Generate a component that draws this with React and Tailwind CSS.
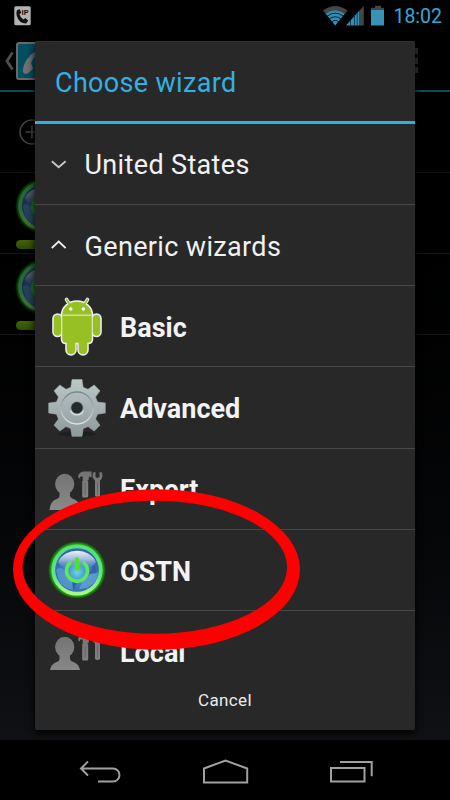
import React from "react";

function Globe({ className }) {
  return (
    <svg viewBox="0 0 60 60" className={className}>
      <defs>
        <radialGradient id="glow">
          <stop offset="0.84" stopColor="#22d400" stopOpacity="1" />
          <stop offset="0.92" stopColor="#1fae00" stopOpacity="0.75" />
          <stop offset="1" stopColor="#1a8a00" stopOpacity="0" />
        </radialGradient>
        <linearGradient id="ring" x1="0" y1="0" x2="0" y2="1">
          <stop offset="0" stopColor="#4fe07c" />
          <stop offset="0.6" stopColor="#5de58a" />
          <stop offset="1" stopColor="#b0f98c" />
        </linearGradient>
        <radialGradient id="sea" cx="0.5" cy="0.55" r="0.55">
          <stop offset="0" stopColor="#6ed6e6" />
          <stop offset="0.45" stopColor="#3d86c4" />
          <stop offset="1" stopColor="#3562a6" />
        </radialGradient>
        <linearGradient id="gloss" x1="0" y1="0" x2="0" y2="1">
          <stop offset="0" stopColor="#f0f4fb" />
          <stop offset="0.5" stopColor="#b9cbe4" stopOpacity="0.8" />
          <stop offset="1" stopColor="#7ea6d6" stopOpacity="0.1" />
        </linearGradient>
      </defs>
      <circle cx="30" cy="30" r="29" fill="url(#glow)" />
      <circle cx="30" cy="30" r="25.6" fill="url(#ring)" />
      <circle cx="30" cy="30" r="21.8" fill="url(#sea)" />
      <path d="M9 30q4-4 8 0l5 8 6 3-2 9q-9-1-14-9z" fill="#5b9fd0" opacity=".7" />
      <path d="M37 38l5-2 4-9 5 6q-1 10-11 15l-8 1z" fill="#6aa6d6" opacity=".75" />
      <path d="M25 41l5 1-4 8zM42 34l5-9 3 8z" fill="#2850a0" opacity=".75" />
      <path d="M11 22a20.500 18 0 0 1 38 0q-5 7-12 6-7-5-14 0-8 1-12-6z" fill="url(#gloss)" />
      <path d="M23 23a10.500 10.500 0 1 0 14 0" fill="none" stroke="#5ce95c" strokeWidth="3.600" strokeLinecap="round" />
      <path d="M30 19.500v9" stroke="#4be821" strokeWidth="4.400" strokeLinecap="round" />
    </svg>
  );
}

function Robot() {
  const body = (
    <>
      <path d="M15.500 18a14.500 13 0 0 1 29 0z" />
      <path d="M15.500 18h29v24q0 3.500-3.500 3.500H40V53a4 4 0 0 1-8 0v-7.500h-4V53a4 4 0 0 1-8 0v-7.500h-1q-3.500 0-3.500-3.500z" />
      <rect x="7" y="18" width="7" height="20.500" rx="3.500" />
      <rect x="46" y="18" width="7" height="20.500" rx="3.500" />
      <path d="M23 8l-3.500-5.500M37 8l3.500-5.500" fill="none" strokeLinecap="round" />
    </>
  );
  return (
    <svg viewBox="0 0 60 60" className="size-[60px]">
      <g fill="#efefef" stroke="#efefef" strokeWidth="3.600">{body}</g>
      <g fill="#97c024" stroke="#97c024" strokeWidth="0.500">{body}</g>
      <path d="M23 8l-3.500-5.500M37 8l3.500-5.500" stroke="#97c024" strokeWidth="1.500" strokeLinecap="round" />
      <path d="M15.500 18.200h29" stroke="#dfe9bd" strokeWidth="1.200" />
      <circle cx="23.800" cy="12" r="1.700" fill="#fff" />
      <circle cx="36.300" cy="12" r="1.700" fill="#fff" />
    </svg>
  );
}

function Gear() {
  return (
    <svg viewBox="0 0 60 60" className="size-[60px]">
      <defs>
        <linearGradient id="steel" x1="0" y1="0" x2="0" y2="1">
          <stop offset="0" stopColor="#bcc7c8" />
          <stop offset="1" stopColor="#8d9a9b" />
        </linearGradient>
        <linearGradient id="rim" x1="0" y1="0" x2="0" y2="1">
          <stop offset="0" stopColor="#788687" />
          <stop offset="1" stopColor="#dce3e3" />
        </linearGradient>
      </defs>
      <ellipse cx="30" cy="56" rx="19" ry="2.500" fill="#191919" opacity=".7" />
      <path
        fill="url(#steel)"
        stroke="#9da9aa"
        strokeWidth=".6"
        d="M25 1.500h10l1.200 7.800 4.800 2L47.200 7 53 12.800 48.500 19l2 5 7.800 1v10l-7.800 1.200-2 4.800 4.500 6.200L47.200 53 41 48.600l-4.800 2L35 58.300H25l-1.200-7.700-4.800-2L12.800 53 7 47.200l4.500-6.200-2-4.800L1.700 35V25l7.800-1 2-5L7 12.800 12.800 7 19 11.300l4.800-2z"
      />
      <circle cx="30" cy="30" r="16" fill="none" stroke="url(#rim)" strokeWidth="1.300" />
      <circle cx="30" cy="30" r="6.800" fill="#89999a" />
      <path d="M23.500 32.500a7 7 0 0 0 13 0" fill="none" stroke="#dfe5e5" strokeWidth="1.200" />
      <circle cx="30" cy="29.800" r="5.700" fill="#272a2a" />
    </svg>
  );
}

function Person() {
  return (
    <svg viewBox="0 0 60 60" className="size-[60px]">
      <defs>
        <linearGradient id="gray" gradientUnits="userSpaceOnUse" x1="0" y1="12" x2="0" y2="51">
          <stop offset="0" stopColor="#737373" />
          <stop offset="1" stopColor="#898989" />
        </linearGradient>
      </defs>
      <g fill="url(#gray)">
        <ellipse cx="17.700" cy="25" rx="9.600" ry="10.300" />
        <path d="M12.500 31h10.500v6q.5 2 4.500 3.500 5.500 2.500 6 10.500h-31q.5-8 6-10.500 4-1.500 4-3.500z" />
        <path d="M31 18q.5-4.500 5-5.500h8.500v6L42 17.500l-.5 3.500h-5.800v-3.500H33.500l-1 2z" />
        <rect x="35.200" y="21" width="6" height="17.500" rx="1.500" />
        <path d="M46 13.500q-1.500 5 2 8V37q2.500 2 5 0V21.500q3.500-3 2-8l-2.500-.5v5l-2 1-2-1V13z" />
      </g>
      <path d="M38.200 24v12M50.500 24v12" stroke="#666" strokeWidth="1" />
    </svg>
  );
}

function Group({ label, open }) {
  return (
    <div className="flex h-[81.250px] shrink-0 items-center border-b border-[#474747] pl-4">
      <svg viewBox="0 0 16 10" className="h-2.5 w-4" fill="none" stroke={open ? "#efefef" : "#c9c9c9"} strokeWidth="1.800">
        <path d={open ? "M.8 8L7.700 1.600l6.900 6.400" : "M.8 2.200L7.700 8.200l6.900-6"} />
      </svg>
      <span className="ml-[17.500px] whitespace-nowrap pt-1 text-[27px] tracking-[0.350px] text-[#f1f1f1]">{label}</span>
    </div>
  );
}

function Item({ label, icon }) {
  return (
    <div className="flex h-[81.250px] shrink-0 items-center border-b border-[#474747] pt-px pl-3">
      <div className="flex w-[73px] shrink-0">{icon}</div>
      <span className="whitespace-nowrap pt-[3px] text-[27px] font-bold text-[#f3f3f3]">{label}</span>
    </div>
  );
}

function StatusBar() {
  return (
    <div className="flex h-8 shrink-0 items-center bg-black pr-2 pl-3.5">
      <svg viewBox="0 0 17 20" className="h-5 w-[17px]">
        <rect x=".3" y=".3" width="16.400" height="19" rx="1.500" fill="#b3b3b3" />
        <path d="M2.800 4.500L5.500 3l1.800 3.800-1.800 1.400q.8 3.800 4 5.300l1.700-1.500 3 2.500-2 3Q5 17.500 2.800 10q-.8-3.500 0-5.500z" fill="#111" />
        <text x="7.500" y="8.500" fontSize="7.500" fontWeight="700" fill="#111">IP</text>
      </svg>
      <div className="grow" />
      <svg viewBox="0 0 62 22" className="mr-[8.500px] h-[22px] w-[62px]">
        <path d="M0 5.500Q12.200-3.500 24.400 5.500L21.800 9Q12.200 3 2.600 9z" fill="#454545" />
        <path d="M2.600 8.800Q12.200 1.500 21.800 8.800L12.200 20.500z" fill="#318fb7" />
        <path d="M4 11.200Q12.200 5 20.400 11.200M6 14Q12.200 9.500 18.400 14M8.500 17Q12.200 13.800 15.900 17" fill="none" stroke="#05202c" strokeWidth="1" />
        <path d="M36 6l4.800-5v19.500H36z" fill="#454545" />
        <path d="M23 20.500L36 6v14.500z" fill="#318fb7" />
        <path d="M27.500 15v6M31.500 10v11M34.200 8v13" stroke="#0b2e3d" strokeWidth=".8" />
        <path d="M52 .8h6v2h3v2.500H48V2.800h4z" fill="#454545" />
        <path d="M48 5h13v15.500H48z" fill="#3792b8" />
      </svg>
      <span className="pt-px text-[19.500px] text-[#33a9d8]">18:02</span>
    </div>
  );
}

function Account() {
  return (
    <div className="flex h-[81.250px] shrink-0 flex-col border-b border-[#15171a] pt-1 pl-3.5">
      <Globe className="size-[58px] shrink-0 opacity-45" />
      <div className="mt-[5px] ml-0.5 h-[9.500px] w-12 shrink-0 rounded-full bg-linear-to-b from-[#426309] to-[#304c08]" />
    </div>
  );
}

function Background() {
  return (
    <div className="flex h-[708px] shrink-0 flex-col bg-linear-to-b from-black to-[#0f1114]">
      <div className="flex h-[59.500px] shrink-0 items-center border-b-2 border-[#0f4960] bg-black pl-1">
        <svg viewBox="0 0 10 20" className="h-5 w-2.5" fill="none" stroke="#4d4d4d" strokeWidth="2.800">
          <path d="M8.500 1.500L3 10l5.500 8.500" />
        </svg>
        <svg viewBox="0 0 38 38" className="ml-0.5 size-[38px]">
          <rect x="1" y="1" width="36" height="36" rx="2" fill="#034f61" stroke="#686868" strokeWidth="2" />
          <path d="M23 8q-10 3-15 15-3 9 2 9 5-2 7-6l-2-5q3-7 8-9z" fill="#717171" />
        </svg>
        <div className="grow" />
        <div className="mr-8 flex flex-col gap-[3.500px]">
          <i className="size-1.5 bg-[#333]" />
          <i className="size-1.5 bg-[#333]" />
          <i className="size-1.5 bg-[#333]" />
        </div>
      </div>
      <div className="flex h-[81px] shrink-0 items-center border-b border-[#111213] pl-[19px]">
        <svg viewBox="0 0 26 26" className="size-[26px]" fill="none" stroke="#424242" strokeWidth="1.600">
          <circle cx="13" cy="13" r="12" />
          <path d="M13 6.500v13M6.500 13h13" />
        </svg>
      </div>
      <Account />
      <Account />
    </div>
  );
}

function NavBar() {
  return (
    <div className="flex h-[60px] shrink-0 items-center justify-between bg-black pt-1 pr-[77px] pl-[79px]">
      <svg viewBox="0 0 42 24" className="h-6 w-[42px]" fill="none" stroke="#a1a1a1" strokeWidth="2">
        <path d="M9 1.500L2 8.500l7 7M2 8.500h32a6.500 6.500 0 0 1 0 13H19" />
      </svg>
      <svg viewBox="0 0 46 26" className="h-[26px] w-[46px]" fill="none" stroke="#a1a1a1" strokeWidth="2">
        <path d="M1 9.500L22.500 1.500l21.700 8v14H1z" />
      </svg>
      <svg viewBox="0 0 43 24" className="h-6 w-[43px]" fill="none" stroke="#a1a1a1" strokeWidth="2">
        <path d="M1 8h33.500v13.500H1zM10 2h31.700v14.200" />
      </svg>
    </div>
  );
}

export default function App() {
  return (
    <div className="relative flex h-[800px] w-[450px] flex-col overflow-hidden bg-black font-[Roboto,sans-serif]">
      <StatusBar />
      <Background />
      <NavBar />
      <div className="absolute top-[41px] left-[35px] flex h-[689px] w-[380px] flex-col rounded-[2px] border-t border-[#333] bg-[#282828] shadow-[0_3px_9px_#000]">
        <div className="flex h-[82px] shrink-0 items-center border-b-[3px] border-[#2fb0e2] pt-1 pl-5">
          <h1 className="text-[27px] tracking-[0.330px] text-[#33b0e2]">Choose wizard</h1>
        </div>
        <div className="flex h-[546px] shrink-0 flex-col overflow-hidden">
          <div className="-mt-[0.500px] flex shrink-0 flex-col">
            <Group label="United States" />
            <Group label="Generic wizards" open />
            <Item label="Basic" icon={<Robot />} />
            <Item label="Advanced" icon={<Gear />} />
            <Item label="Expert" icon={<Person />} />
            <Item label="OSTN" icon={<Globe className="size-[60px]" />} />
            <Item label="Local" icon={<Person />} />
          </div>
        </div>
        <button className="flex grow items-center justify-center pt-0.5 text-[17px] tracking-[0.350px] text-[#ececec]">Cancel</button>
      </div>
      <svg viewBox="0 0 450 800" className="pointer-events-none absolute inset-0 h-[800px] w-[450px]">
        <path
          fill="#fe0000"
          fillRule="evenodd"
          d="M13 569.500a143.500 80.300 0 1 0 287 0a143.500 80.300 0 1 0-287 0zM22.500 567.200a132.300 66.500 0 1 0 264.600 0a132.300 66.500 0 1 0-264.600 0z"
        />
      </svg>
    </div>
  );
}
